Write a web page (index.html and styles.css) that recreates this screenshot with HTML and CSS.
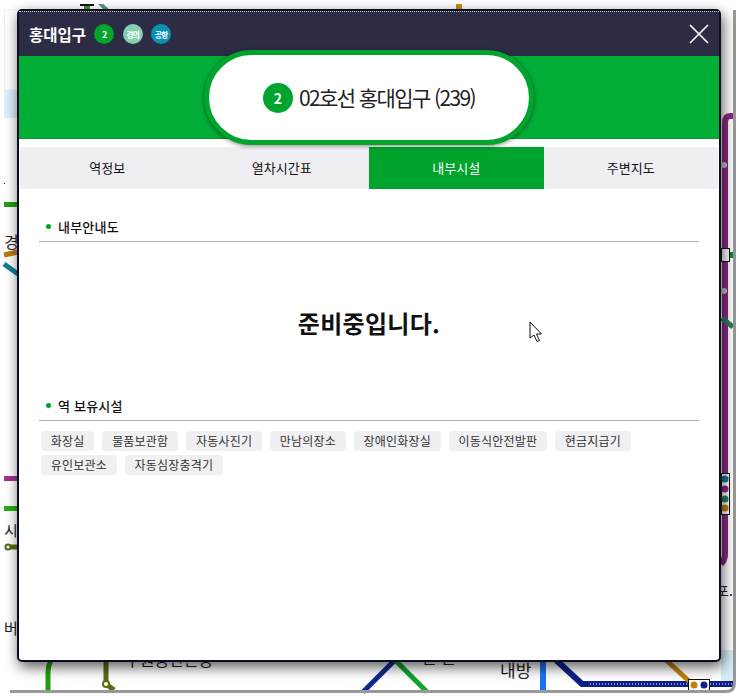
FILE: index.html
```html
<!DOCTYPE html>
<html lang="ko">
<head>
    <meta charset="UTF-8">
    <title>홍대입구</title>
    <meta name="viewport" content="width=device-width">
    <link rel="stylesheet" href="styles.css">
</head>
<body>
<div class="screen">

    <!-- subway map behind the popup -->
    <svg class="map" width="738" height="696" viewBox="0 0 738 696" fill="none">
        <rect x="80" y="4" width="14" height="2" fill="#111"/>
        <rect x="84" y="6" width="6" height="3" fill="#3f9e10"/>
        <path d="M98 4h5l7 6h-6z" fill="#4f9a80"/>
        <rect x="456" y="4" width="6" height="5" fill="#d08a10"/>

        <rect x="4.5" y="10" width="14" height="80" stroke="#e6f2fb"/>
        <rect x="4" y="90" width="14" height="28" fill="#dbeefb"/>
        <rect x="4" y="183" width="1" height="1" fill="#111"/>
        <rect x="4" y="202" width="14" height="5" fill="#22a010"/>
        <text class="map-text" x="4" y="248" font-size="16">경</text>
        <path d="M4 255l14-3" stroke="#b87a10" stroke-width="5"/>
        <path d="M4 264l14 10" stroke="#0f8098" stroke-width="5"/>
        <rect x="4" y="476" width="14" height="5" fill="#a0318f"/>
        <rect x="4" y="506" width="14" height="5" fill="#22b014"/>
        <text class="map-text" x="4" y="536" font-size="15">시</text>
        <path d="M8 547h10" stroke="#556b10" stroke-width="5"/>
        <circle cx="8" cy="547" r="2.5" fill="#fff" stroke="#556b10" stroke-width="2"/>
        <text class="map-text" x="4" y="634" font-size="15">버</text>

        <path d="M48 690v-18q0-6 3-12" stroke="#22a010" stroke-width="5"/>
        <path d="M106 660v24l8 6" stroke="#5a6b14" stroke-width="5"/>
        <circle cx="106" cy="684" r="3" fill="#fff" stroke="#5a6b14" stroke-width="2"/>
        <text class="map-text" x="125" y="666" font-size="16">수원공단본동</text>
        <path d="M363 692l32-32" stroke="#0e2a8c" stroke-width="5"/>
        <path d="M395 660l32 32" stroke="#0fa52d" stroke-width="5"/>
        <text class="map-text" x="422" y="664" font-size="16">근 곤</text>
        <text class="map-text" x="500" y="677" font-size="17">내방</text>
        <rect x="540" y="660" width="6" height="30" fill="#1a75f0"/>

        <path d="M721 650h12v34h-12z" fill="#d6eef6"/>
        <path d="M556 660l26 24q2 0 6 0h145" stroke="#0e1f8c" stroke-width="6"/>
        <path d="M590 684h143" stroke="#fff" stroke-dasharray="1 2"/>
        <path d="M666 660l24 22" stroke="#c0820e" stroke-width="5"/>
        <rect x="688.500" y="679.500" width="21" height="12" fill="#fff" stroke="#111"/>
        <circle cx="694" cy="685" r="3.500" fill="#c0820e"/>
        <circle cx="704" cy="685" r="3.500" fill="#0e1f8c"/>

        <path d="M733 116h-3q-5 0-5 7v431q0 6-4 10" stroke="#8a2a80" stroke-width="6"/>
        <circle cx="724" cy="165" r="3" fill="#c8c8c8"/>
        <circle cx="724" cy="291" r="3" fill="#c8c8c8"/>
        <rect x="721.500" y="248.500" width="8" height="13" fill="#fff" stroke="#111"/>
        <rect x="730" y="252" width="3" height="6" fill="#0c8a3c"/>
        <path d="M722 318l11 9" stroke="#2e7d60" stroke-width="5"/>
        <rect x="721.500" y="473.500" width="8" height="41" fill="#fff" stroke="#111"/>
        <circle cx="725" cy="479" r="3.500" fill="#0f7a8a"/>
        <circle cx="725" cy="489" r="3.500" fill="#8a2a80"/>
        <circle cx="725" cy="499" r="3.500" fill="#2e7d60"/>
        <circle cx="725" cy="508" r="3.500" fill="#c0820e"/>
        <text class="map-text" x="716" y="596" font-size="14">포.</text>

        <!-- window edge -->
        <path d="M10 691.500h716q8.500 0 8.500-8.500v-673" stroke="#999" stroke-width="3"/>
    </svg>

    <div class="modal">
        <div class="modal-head">
            <span class="modal-title">홍대입구</span>
            <span class="badge badge-line">2</span>
            <span class="badge badge-gyeongui">경의</span>
            <span class="badge badge-airport">공항</span>
            <svg class="close" width="20" height="20" viewBox="0 0 20 20">
                <path d="M1 1l18 18M19 1L1 19" stroke="#fff" stroke-width="1.700"/>
            </svg>
        </div>

        <div class="band">
            <div class="pill">
                <span class="pill-num">2</span>
                <span class="pill-name">02호선 홍대입구 (239)</span>
            </div>
        </div>

        <div class="tabs">
            <div class="tab">역정보</div>
            <div class="tab">열차시간표</div>
            <div class="tab tab-on">내부시설</div>
            <div class="tab">주변지도</div>
        </div>

        <div class="content">
            <h3 class="sec-title">내부안내도</h3>
            <div class="notice">준비중입니다.</div>
            <h3 class="sec-title sec-second">역 보유시설</h3>
            <div class="chips">
                <span class="chip">화장실</span>
                <span class="chip">물품보관함</span>
                <span class="chip">자동사진기</span>
                <span class="chip">만남의장소</span>
                <span class="chip">장애인화장실</span>
                <span class="chip">이동식안전발판</span>
                <span class="chip">현금지급기</span>
                <span class="chip">유인보관소</span>
                <span class="chip">자동심장충격기</span>
            </div>
        </div>

        <!-- mouse pointer -->
        <svg class="cursor" width="14" height="22" viewBox="0 0 14 22">
            <path d="M1 1v16l4-3 3 6.500 2.500-1-3-6.500h5z" fill="#fff" stroke="#111"/>
        </svg>
    </div>
</div>
</body>
</html>
```

FILE: styles.css
```css
* {box-sizing: border-box;}

body {
  margin: 0;
  background: #fff;
  font-family: "Noto Sans CJK KR", "Noto Sans", sans-serif;
  color: #111;
}

.screen {
  position: relative;
  width: 738px;
  height: 696px;
  padding: 9px 0 0 17px;
  overflow: hidden;
}

.map {
  position: absolute;
  left: 0;
  top: 0;
}

.map-text {
  fill: #222;
  font-family: "Noto Sans CJK KR", sans-serif;
}

.modal {
  position: relative;
  width: 704px;
  height: 653px;
  background: #fff;
  border: 2px solid #0c0c22;
  border-radius: 5px;
  box-shadow: 2px 5px 14px rgba(0,0,0,.65);
}

.modal-head {
  display: flex;
  align-items: center;
  height: 45px;
  padding: 0 10px;
  background: #2c2c44;
  border-top: 1px dotted #ccccd4;
}

.modal-title {
  margin-right: 8px;
  color: #fff;
  font-size: 15.500px;
  font-weight: 700;
}

.badge {
  display: flex;
  align-items: center;
  justify-content: center;
  width: 20px;
  height: 20px;
  margin-right: 8.500px;
  border-radius: 50%;
  color: #fff;
  font-size: 8px;
  font-weight: 700;
  letter-spacing: -1px;
}

.badge-line {
  background: #00a52d;
  font-size: 9px;
}

.badge-gyeongui {
  background: #84d0b0;
}

.badge-airport {
  background: #0a90b4;
}

.close {
  margin-left: auto;
}

.band {
  display: flex;
  justify-content: center;
  height: 83px;
  background: #03ae37;
  border-bottom: 1px solid #02a030;
}

.pill {
  position: relative;
  display: flex;
  align-items: center;
  justify-content: center;
  gap: 6px;
  width: 330px;
  height: 95px;
  margin-top: -6px;
  background: #fff;
  border: 5px solid #00a52d;
  border-radius: 48px;
  box-shadow: 0 1px 4px rgba(0,0,0,.5);
}

.pill-num {
  display: flex;
  align-items: center;
  justify-content: center;
  width: 30px;
  height: 30px;
  border-radius: 50%;
  background: #00a52d;
  color: #fff;
  font-size: 14px;
  font-weight: 700;
}

.pill-name {
  padding-bottom: 2px;
  font-size: 21px;
  letter-spacing: -1.600px;
  color: #222;
}

.tabs {
  display: grid;
  grid-template-columns: repeat(4, 1fr);
  margin: 8px 1px 0;
}

.tab {
  height: 42px;
  line-height: 42px;
  text-align: center;
  background: #efeef2;
  font-size: 13px;
}

.tab-on {
  background: #00a42d;
  color: #fff;
}

.content {
  padding: 0 20px;
}

.sec-title {
  display: flex;
  align-items: center;
  gap: 7px;
  height: 25px;
  margin: 28px 0 0;
  padding: 0 0 6px 7px;
  border-bottom: 1px solid #aeaeb4;
  font-size: 13px;
  font-weight: 500;
  letter-spacing: .2px;
}

.sec-title::before {
  content: "";
  width: 5px;
  height: 5px;
  border-radius: 50%;
  background: #00a52d;
}

.sec-second {
  margin-top: 0;
}

.notice {
  display: flex;
  align-items: center;
  justify-content: center;
  height: 154px;
  padding-top: 6px;
  font-size: 24px;
  font-weight: 700;
  letter-spacing: .3px;
}

.chips {
  display: flex;
  flex-wrap: wrap;
  gap: 4px 8px;
  margin-top: 10px;
  padding-left: 2px;
}

.chip {
  height: 20px;
  line-height: 20px;
  padding: 0 9.800px;
  border-radius: 4px;
  background: #f0f0f2;
  color: #333;
  font-size: 12px;
  letter-spacing: .2px;
}

.cursor {
  position: absolute;
  left: 510px;
  top: 310px;
}
```
